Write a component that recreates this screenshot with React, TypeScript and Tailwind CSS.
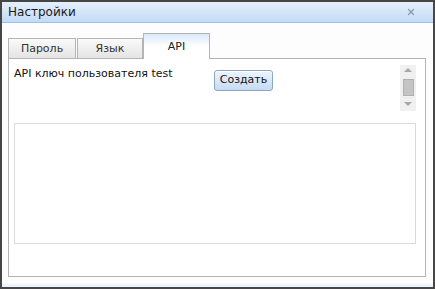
import { X } from 'lucide-react';

const font = { fontFamily: '"DejaVu Sans", Verdana, sans-serif' };

function Tab({ label, active, w }: { label: string; active?: boolean; w: string }) {
  if (active) {
    return (
      <div className={`relative -mb-px flex h-[26px] ${w} items-center justify-center border border-b-0 border-[#b4b4b4] bg-gradient-to-b from-[#d9e8fa] via-white to-white pt-[2px] text-[11px] text-[#222]`}>
        {label}
      </div>
    );
  }
  return (
    <div className={`flex h-[20px] ${w} items-center justify-center border border-b-0 border-[#b4b4b4] bg-gradient-to-b from-[#fafafa] to-[#e4e4e4] pt-[1px] text-[11px] text-[#333]`}>
      {label}
    </div>
  );
}

export default function App() {
  return (
    <div className="h-[289px] w-[435px] border-2 border-[#474747] bg-[#eef4fb]" style={font}>
      <div className="flex h-full flex-col bg-white">
        {/* Заголовок */}
        <div className="flex h-[21px] shrink-0 items-center justify-between border-b border-[#9fbfe6] bg-gradient-to-b from-[#e6f0fc] to-[#c3daf6] pl-[6px] pr-[17px]">
          <span className="text-[12px] text-[#1a1a1a]">Настройки</span>
          <X size={10} strokeWidth={3} className="text-[#8b9aab]" />
        </div>

        <div className="flex flex-1 flex-col bg-[#fdfdfd] pl-[6px] pr-[7px] pt-[10px]">
          {/* Вкладки */}
          <div className="flex items-end">
            <Tab label="Пароль" w="w-[68px]" />
            <div className="w-[1px]" />
            <Tab label="Язык" w="w-[66px]" />
            <Tab label="API" w="w-[67px]" active />
          </div>

          <div className="flex h-[219px] flex-col border border-[#b4b4b4] bg-white pl-[5px] pr-[9px] pt-[6px]">
            <div className="flex h-[54px]">
              <div className="w-[200px] pt-[1px] text-[11px] text-[#111]">API ключ пользователя test</div>
              <div className="pt-[1px]">
                <button className="h-[21px] w-[59px] rounded-[3px] border border-[#8ca6c8] bg-gradient-to-b from-[#eef5fd] to-[#c6dbf4] text-[11px] text-[#111] shadow-[inset_0_1px_0_#fff]">
                  Создать
                </button>
              </div>
              <div className="flex-1" />
              <div className="flex h-[46px] w-[16px] flex-col items-center bg-[#f0f0f0]">
                <div className="mt-[3px] h-0 w-0 border-x-[4px] border-b-[4px] border-x-transparent border-b-[#a8a8a8]" />
                <div className="mt-[7px] h-[17px] w-[11px] border border-[#b0b0b0] bg-[#c4c4c4]" />
                <div className="mt-[6px] h-0 w-0 border-x-[4px] border-t-[4px] border-x-transparent border-t-[#a8a8a8]" />
              </div>
            </div>
            <div className="mt-[4px] h-[121px] border border-[#dadada] bg-white" />
          </div>

          <div className="h-[6px]" />
        </div>
        <div className="h-[3px] bg-[#eef4fb]" />
      </div>
    </div>
  );
}
